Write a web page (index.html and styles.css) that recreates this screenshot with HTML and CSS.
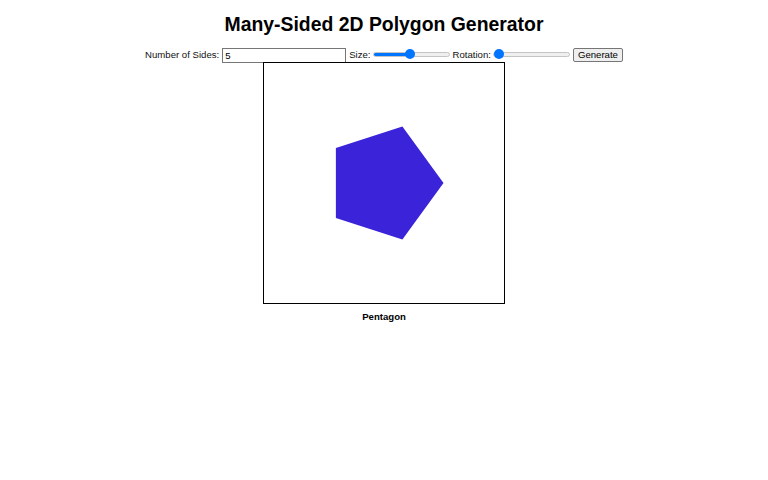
FILE: index.html
```html
<!DOCTYPE html>
<html>
<head>
<meta charset="utf-8">
<link rel="stylesheet" href="styles.css">
</head>
<body>
<h1 class="title">Many-Sided 2D Polygon Generator</h1>
<div class="controls">
  <label class="lbl">Number of Sides:</label>
  <input class="num" type="text" value="5">
  <label class="lbl">Size:</label>
  <input class="range" type="range" min="0" max="100" value="48" style="--fill:48%">
  <label class="lbl">Rotation:</label>
  <input class="range" type="range" min="0" max="360" value="0" style="--fill:0%">
  <button class="btn">Generate</button>
</div>
<div class="stage">
  <svg class="canvas" width="240" height="240" viewBox="0 0 240 240">
    <polygon fill="#3a23d8" points="179.5,120 138.4,176.6 71.9,155 71.9,85 138.4,63.4"/>
  </svg>
</div>
<div class="name">Pentagon</div>
</body>
</html>
```
FILE: styles.css
```css
html, body { margin: 0; padding: 0; background: #fff; }
body {
  font-family: "Liberation Sans", Arial, sans-serif;
  color: #000;
  display: flex;
  flex-direction: column;
  align-items: center;
}
.title {
  font-size: 19.4px;
  font-weight: bold;
  margin: 13px 0 11px;
  line-height: 22px;
}
.controls {
  display: flex;
  align-items: center;
  font-size: 9.6px;
  height: 16px;
  color: #111;
}
.num {
  box-sizing: border-box;
  width: 124px;
  height: 15px;
  font-size: 9.6px;
  font-family: "Liberation Sans", Arial, sans-serif;
  padding: 1px 2px;
  border: 1px solid #767676;
  margin: 2px 3px 0 3px;
}
.range {
  -webkit-appearance: none;
  appearance: none;
  width: 77px;
  height: 10px;
  margin: 0 3px 0 2px;
  padding: 0;
  background: transparent;
}
.range::-webkit-slider-runnable-track {
  height: 5px;
  border-radius: 3px;
  box-sizing: border-box;
  border: 1px solid #c4c4c4;
  background: linear-gradient(to right, #0075ff 0, #0075ff var(--fill), #efefef var(--fill), #efefef 100%);
}
.range::-webkit-slider-thumb {
  -webkit-appearance: none;
  appearance: none;
  width: 10px;
  height: 10px;
  border-radius: 50%;
  background: #0075ff;
  border: none;
  margin-top: -3.5px;
}
.btn {
  box-sizing: border-box;
  font-size: 9.6px;
  font-family: "Liberation Sans", Arial, sans-serif;
  width: 50px;
  height: 14px;
  padding: 0;
  margin: 1px 0 0 0;
  border: 1px solid #767676;
  border-radius: 2px;
  background: #efefef;
  color: #000;
}
.canvas {
  display: block;
  border: 1px solid #000;
  background: #fff;
}
.name {
  font-size: 9.6px;
  font-weight: bold;
  margin-top: 7px;
}
```
